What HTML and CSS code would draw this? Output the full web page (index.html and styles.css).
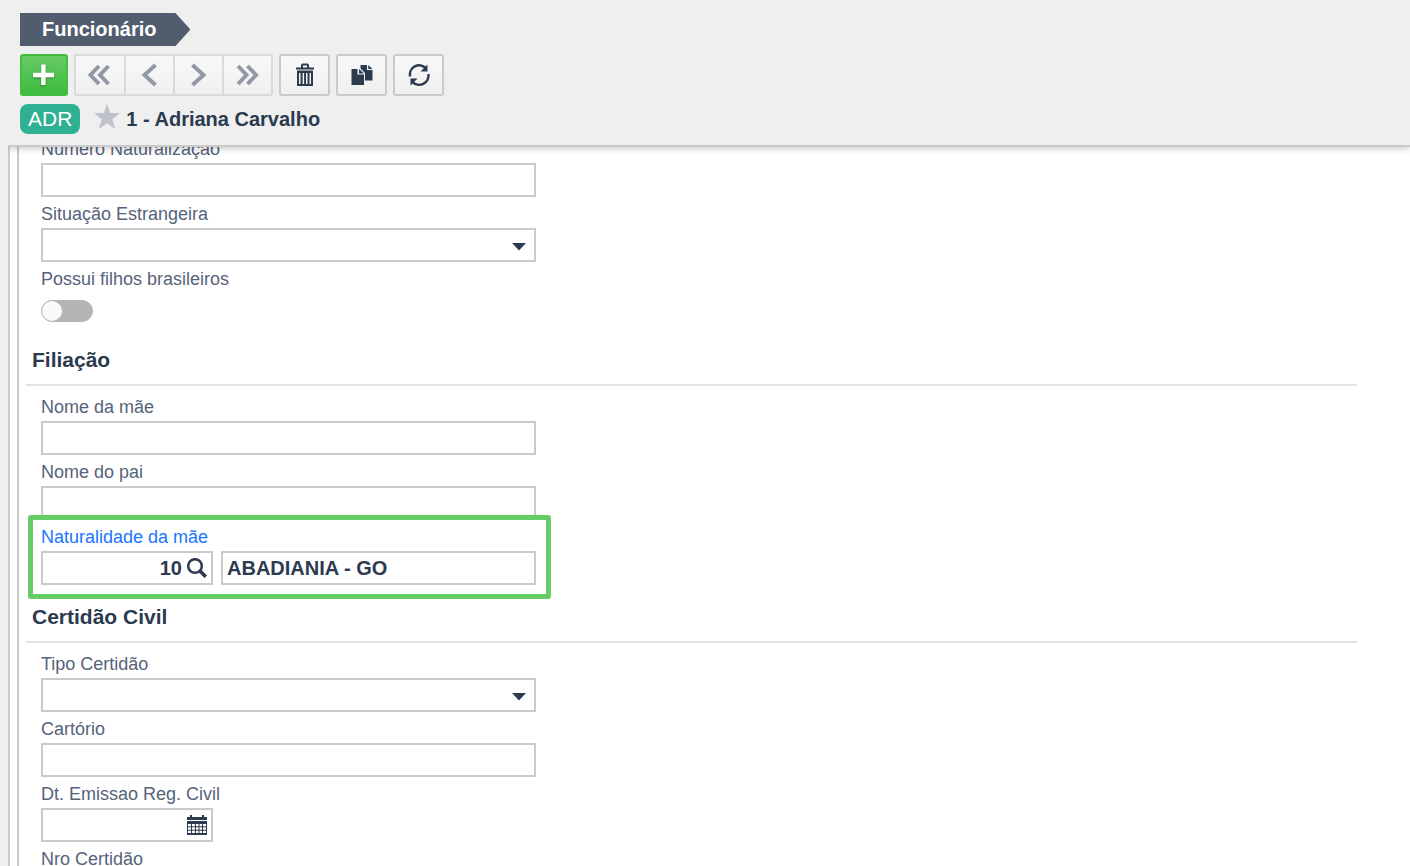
FILE: index.html
```html
<!DOCTYPE html>
<html lang="pt-BR">
<head>
    <meta charset="UTF-8">
    <meta name="viewport" content="width=device-width, initial-scale=1.0">
    <title>Funcionário</title>
    <link rel="stylesheet" href="styles.css">
</head>
<body>
    <header class="header">
        <h1 class="screen-title">Funcionário</h1>
        <div class="toolbar">
            <button type="button" class="btn btn-add" aria-label="Adicionar">
                <svg width="22" height="22" viewBox="0 0 22 22"><path d="M8.200 0.500h4.400v8.300H21v4.400h-8.400V21H8.200v-7.800H0V8.800h8.200z"/></svg>
            </button>
            <div class="nav-group">
                <button type="button" class="btn" aria-label="Primeiro">
                    <svg class="chevron" width="24" height="24" viewBox="0 0 24 24"><path d="M11 3l-8.500 9 8.500 9M20.500 3L12 12l8.500 9"/></svg>
                </button>
                <button type="button" class="btn" aria-label="Anterior">
                    <svg class="chevron" width="24" height="24" viewBox="0 0 24 24"><path d="M17.500 2L6.500 12l11 10"/></svg>
                </button>
                <button type="button" class="btn" aria-label="Próximo">
                    <svg class="chevron" width="24" height="24" viewBox="0 0 24 24"><path d="M5.500 2l11 10-11 10"/></svg>
                </button>
                <button type="button" class="btn" aria-label="Último">
                    <svg class="chevron" width="24" height="24" viewBox="0 0 24 24"><path d="M2 3l8.500 9L2 21M11.500 3l8.500 9-8.500 9"/></svg>
                </button>
            </div>
            <button type="button" class="btn" aria-label="Excluir">
                <svg width="20" height="24" viewBox="0 0 20 24">
                    <path d="M1 4.500h18v2H1zM6 4.500V2.500q0-2 2-2h4q2 0 2 2v2h-2V2.500H8v2z"/>
                    <path fill-rule="evenodd" d="M2 7.500h16v15.500H2zM4 10v11h1.500V10zM7.600 10v11h1.500V10zM11 10v11h1.500V10zM14.500 10v11H16V10z"/>
                </svg>
            </button>
            <button type="button" class="btn" aria-label="Duplicar">
                <svg width="22" height="22" viewBox="0 0 22 22">
                    <path d="M10 1h6v5h5.500v10.500H14V9L9.500 4.500V1zM17.200 1l4.300 4h-4.300z"/>
                    <path d="M0.500 5h6v5.500H13V21H0.500zM8 5l5 4.500H8z"/>
                </svg>
            </button>
            <button type="button" class="btn" aria-label="Atualizar">
                <svg width="24" height="24" viewBox="0 0 24 24">
                    <path class="arc" d="M3 13.500A9.300 9.300 0 0 1 18.800 5.200M21.400 11A9.300 9.300 0 0 1 5.400 18.800"/>
                    <path d="M20.500 1.500V8.500h-7zM3.500 22.500v-7h7z"/>
                </svg>
            </button>
        </div>
        <div class="record">
            <span class="badge">ADR</span>
            <svg class="star" width="26" height="26" viewBox="0 0 26 26"><path d="M13 0l3.300 9H26l-7.600 6.200L21.200 25 13 19.200 4.800 25l2.800-9.800L0 9h9.700z"/></svg>
            <span class="record-name">1 - Adriana Carvalho</span>
        </div>
    </header>

    <main class="content">
        <form class="panel">
            <div class="fields fields-first">
                <div class="field">
                    <label for="numNaturalizacao">Número Naturalização</label>
                    <input type="text" id="numNaturalizacao">
                </div>
                <div class="field">
                    <label for="situacao">Situação Estrangeira</label>
                    <div class="select">
                        <select id="situacao"><option></option></select>
                        <svg width="14" height="8" viewBox="0 0 14 8"><path d="M0 0h14L7 7.500z"/></svg>
                    </div>
                </div>
                <div class="field">
                    <label for="filhos">Possui filhos brasileiros</label>
                    <div class="switch-row">
                        <input type="checkbox" class="switch" id="filhos">
                    </div>
                </div>
            </div>

            <h2>Filiação</h2>
            <div class="fields">
                <div class="field">
                    <label for="mae">Nome da mãe</label>
                    <input type="text" id="mae">
                </div>
                <div class="field">
                    <label for="pai">Nome do pai</label>
                    <input type="text" id="pai">
                </div>
                <div class="field highlight">
                    <label for="naturalidade">Naturalidade da mãe</label>
                    <div class="lookup">
                        <div class="short">
                            <input type="text" class="code" id="naturalidade" value="10">
                            <svg width="20" height="20" viewBox="0 0 20 20"><circle cx="8" cy="8" r="6.800"/><path class="handle" d="M12.800 12.800l6 6"/></svg>
                        </div>
                        <input type="text" aria-label="Cidade" value="ABADIANIA - GO">
                    </div>
                </div>
            </div>

            <h2>Certidão Civil</h2>
            <div class="fields">
                <div class="field">
                    <label for="tipoCertidao">Tipo Certidão</label>
                    <div class="select">
                        <select id="tipoCertidao"><option></option></select>
                        <svg width="14" height="8" viewBox="0 0 14 8"><path d="M0 0h14L7 7.500z"/></svg>
                    </div>
                </div>
                <div class="field">
                    <label for="cartorio">Cartório</label>
                    <input type="text" id="cartorio">
                </div>
                <div class="field">
                    <label for="dtEmissao">Dt. Emissao Reg. Civil</label>
                    <div class="short">
                        <input type="text" id="dtEmissao">
                        <svg class="calendar" width="20" height="20" viewBox="0 0 20 20">
                            <path fill-rule="evenodd" d="M0 2h3V0h2v2h10V0h2v2h3v3H0zM0 6h20v14H0zM1 9v2.200h3V9zM5 9v2.200h3V9zM9 9v2.200h2.500V9zM12.500 9v2.200h2.500V9zM16 9v2.200h3V9zM1 12.200v2.500h3v-2.500zM5 12.200v2.500h3v-2.500zM9 12.200v2.500h2.500v-2.500zM12.500 12.200v2.500h2.500v-2.500zM16 12.200v2.500h3v-2.500zM1 15.800v2.200h3v-2.200zM5 15.800v2.200h3v-2.200zM9 15.800v2.200h2.500v-2.200zM12.500 15.800v2.200h2.500v-2.200zM16 15.800v2.200h3v-2.200z"/>
                        </svg>
                    </div>
                </div>
                <div class="field">
                    <label for="nroCertidao">Nro Certidão</label>
                    <input type="text" id="nroCertidao">
                </div>
            </div>
        </form>
    </main>
</body>
</html>
```
FILE: styles.css
```css
* {
    box-sizing: border-box;
}
body {
    display: flex;
    flex-direction: column;
    height: 100vh;
    margin: 0;
    padding-left: 8px;
    overflow: hidden;
    background: #efefef;
    color: #2b3a4f;
    font-family: "Liberation Sans", Arial, sans-serif;
    font-size: 18px;
}
svg {
    display: block;
    fill: #2b3a4f;
}

/* header */
.header {
    position: relative;
    flex: none;
    padding: 13px 12px 11px;
    border-bottom: 2px solid #cacaca;
    background: #efefef;
    box-shadow: 0 2px 6px rgba(0, 0, 0, 0.2);
    clip-path: inset(0 0 -10px 0);
}
.screen-title {
    width: fit-content;
    margin: 0 0 8px;
    padding: 0 34px 0 22px;
    background: #515c6e;
    clip-path: polygon(0 0, calc(100% - 15px) 0, 100% 50%, calc(100% - 15px) 100%, 0 100%);
    color: #fff;
    font-size: 20px;
    line-height: 33px;
}
.toolbar {
    display: flex;
    gap: 6px;
    margin-bottom: 8px;
}
.btn {
    display: flex;
    justify-content: center;
    align-items: center;
    width: 51px;
    height: 42px;
    padding: 0;
    border: 2px solid #cacaca;
    border-radius: 3px;
    background: linear-gradient(#f8f8f8, #f0f0f0);
    cursor: pointer;
}
.btn-add {
    width: 48px;
    border-color: #42bd42;
    background: linear-gradient(#66cb66, #3dbb3d);
}
.btn-add svg {
    fill: #fff;
    filter: drop-shadow(0 1px 1px rgba(0, 0, 0, 0.3));
}
.nav-group {
    display: flex;
}
.nav-group .btn {
    border-color: #dadada;
    border-radius: 0;
}
.nav-group .btn + .btn {
    margin-left: -2px;
}
.nav-group .btn:first-child {
    width: 52px;
    border-radius: 3px 0 0 3px;
}
.nav-group .btn:last-child {
    border-radius: 0 3px 3px 0;
}
.chevron {
    fill: none;
    stroke: #9299a4;
    stroke-width: 4;
}
.arc {
    fill: none;
    stroke: #2b3a4f;
    stroke-width: 2.5;
}
.record {
    display: flex;
    align-items: center;
}
.badge {
    padding: 0 8px;
    border-radius: 8px;
    background: #30b092;
    color: #fff;
    font-size: 21px;
    line-height: 30px;
}
.star {
    margin: 0 6px 4px 14px;
    fill: #bfc2ca;
}
.record-name {
    font-size: 20px;
    font-weight: bold;
}

/* form */
.content {
    flex: 1;
    min-height: 0;
    padding-left: 7px;
    border-left: 2px solid #cacaca;
    background: #fff;
    overflow: hidden;
}
.panel {
    min-height: 100%;
    padding: 0 53px 0 7px;
    border-left: 2px solid #cacaca;
}
.fields {
    width: 510px;
    max-width: 100%;
    padding: 4px 0 0 15px;
}
.fields-first {
    margin-top: -19px;
}
h2 {
    margin: 0;
    padding: 8px 6px 0;
    border-bottom: 2px solid #e2e2e2;
    font-size: 21px;
    line-height: 48px;
}
label {
    display: block;
    padding-top: 3px;
    color: #56637a;
    line-height: 28px;
}
input,
select {
    display: block;
    width: 100%;
    height: 34px;
    margin: 0;
    padding: 0 4px;
    border: 2px solid #cacaca;
    border-radius: 0;
    background: #fff;
    color: #2b3a4f;
    font-family: inherit;
    font-size: 20px;
    font-weight: bold;
    outline: none;
}
.select,
.short {
    position: relative;
}
.select select {
    appearance: none;
}
.select svg {
    position: absolute;
    top: 15px;
    right: 10px;
    pointer-events: none;
}
.short {
    flex: none;
    width: 172px;
}
.short input {
    padding-right: 29px;
}
.short svg {
    position: absolute;
    top: 7px;
    right: 6px;
}
.code {
    text-align: right;
}
.lookup {
    display: flex;
    gap: 8px;
}
.lookup svg {
    fill: none;
    stroke: #2b3a4f;
    stroke-width: 2.5;
}
.lookup .handle {
    stroke-width: 3.5;
}
.switch-row {
    display: flex;
    align-items: center;
    height: 35px;
}
.switch {
    appearance: none;
    width: 52px;
    height: 22px;
    padding: 0;
    border: 1px solid #b5b5b5;
    border-radius: 11px;
    background: #b5b5b5;
    cursor: pointer;
}
.switch::before {
    content: "";
    display: block;
    width: 20px;
    height: 20px;
    border-radius: 50%;
    background: #fafafa;
}
.switch:checked::before {
    margin-left: auto;
}
.highlight {
    position: relative;
    z-index: 0;
}
.highlight::before {
    content: "";
    position: absolute;
    z-index: -1;
    inset: -5px -15px -14px -13px;
    border: 5px solid #66cc66;
    border-radius: 3px;
    background: #fff;
}
.highlight label {
    color: #1a75ff;
}
```
